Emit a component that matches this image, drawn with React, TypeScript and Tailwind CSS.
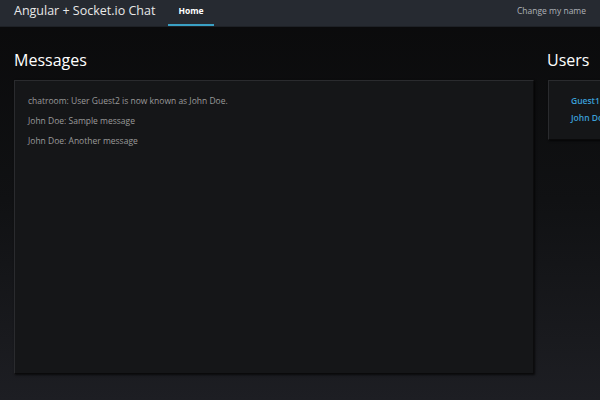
export default function App() {
  return (
    <div className="w-[600px] h-[400px] overflow-hidden bg-gradient-to-b from-[#0a0a0b] via-[#101113] to-[#1d1e23] font-['Open_Sans',sans-serif]">
      <nav className="h-[27px] bg-[#262a31] border-b border-[#1e2126] flex items-stretch pl-[14px] pr-[14px]">
        <div className="text-[12.5px] text-[#e8e8e8] flex items-center pb-[3px]">Angular + Socket.io Chat</div>
        <div className="ml-[13px] flex items-center px-[10px] text-[8.5px] font-bold text-white border-b-2 border-[#3aa0c4] pb-[2px]">Home</div>
        <div className="ml-auto flex items-center text-[8.5px] text-[#aeb2b8] pb-[3px]">Change my name</div>
      </nav>
      <div className="flex pl-[14px] pt-[22px] gap-[13px]">
        <div className="w-[520px] shrink-0">
          <h2 className="text-[16px] font-medium text-white leading-[22px] mb-[9px]">Messages</h2>
          <div className="h-[294px] bg-[#151618] border border-[#2a2b2e] border-b-[#0a0a0b] border-r-[#0c0c0d] shadow-[1px_1px_2px_rgba(0,0,0,0.7)] px-[13px] pt-[14px] text-[8.5px] text-[#9a9a9a] flex flex-col gap-[7px]">
            <div>chatroom: User Guest2 is now known as John Doe.</div>
            <div>John Doe: Sample message</div>
            <div>John Doe: Another message</div>
          </div>
        </div>
        <div className="w-[160px] shrink-0">
          <h2 className="text-[16px] font-medium text-white leading-[22px] mb-[9px]">Users</h2>
          <div className="ml-[1px] h-[60px] bg-[#151618] border border-[#2a2b2e] border-b-[#0a0a0b] shadow-[1px_1px_2px_rgba(0,0,0,0.7)] pl-[22px] pt-[14px] text-[8.5px] font-semibold text-[#3a9fd6] flex flex-col gap-[4px]">
            <div>Guest1</div>
            <div>John Doe</div>
          </div>
        </div>
      </div>
    </div>
  );
}
